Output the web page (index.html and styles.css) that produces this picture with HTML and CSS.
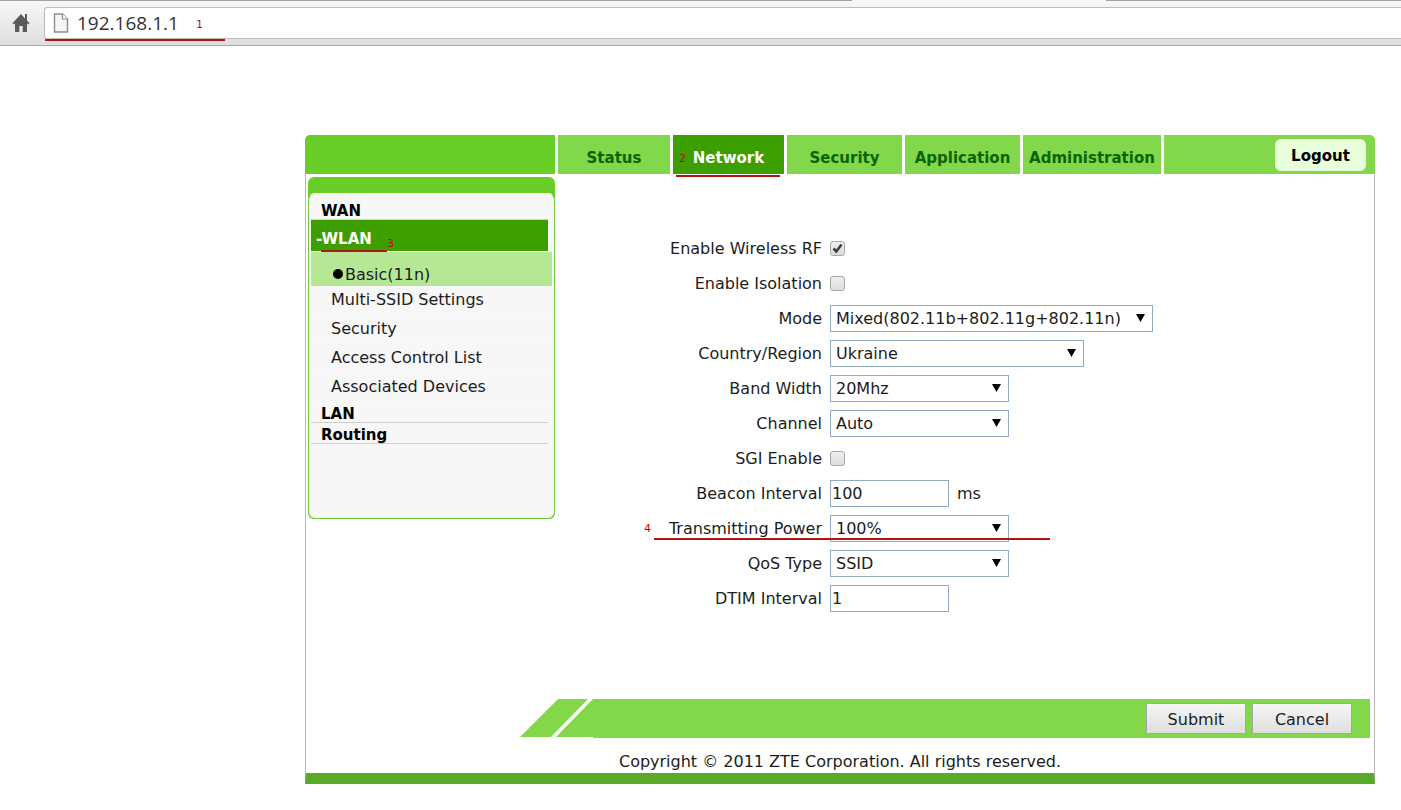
FILE: index.html
```
<!DOCTYPE html>
<html lang="en">
<head>
<meta charset="utf-8">
<title>ZTE - WLAN Basic</title>
<link rel="stylesheet" href="styles.css">
</head>
<body>
<header class="browser">
  <button class="home" type="button" aria-label="Home">
    <svg width="18" height="20" viewBox="0 0 18 20"><path fill="#5a5a5a" d="M9 1 .5 10.3 1.6 11.6 3 10.2V19h4.3v-6h3.4v6H15v-8.8l1.4 1.4 1.1-1.3L15 7.5V1h-2v4.4z"/></svg>
  </button>
  <div class="omnibox">
    <svg width="16" height="20" viewBox="0 0 16 20"><path fill="#f4f4f4" stroke="#8e8e8e" stroke-width="1.4" d="M1.5 1h8L14.500 6v13h-13z"/><path fill="#fff" stroke="#8e8e8e" stroke-width="1.2" d="M9.500 1v5h5"/></svg>
    <input class="url" type="text" value="192.168.1.1" aria-label="Address">
    <span class="note note-1">1</span>
    <span class="mark mark-1"></span>
  </div>
</header>

<div class="page">
  <nav class="topnav">
    <div class="brand"></div>
    <a class="tab tab-status" href="#">Status</a>
    <a class="tab tab-network active" href="#">Network<span class="note note-2">2</span><span class="mark mark-2"></span></a>
    <a class="tab tab-security" href="#">Security</a>
    <a class="tab tab-application" href="#">Application</a>
    <a class="tab tab-admin" href="#">Administration</a>
    <div class="session"><button class="logout" type="button">Logout</button></div>
  </nav>

  <div class="frame">
    <div class="columns">
      <aside class="sidebar">
        <nav class="menu">
          <a class="group" href="#">WAN</a>
          <a class="group current" href="#">-WLAN<span class="note note-3">3</span><span class="mark mark-3"></span></a>
          <a class="item selected" href="#"><span class="dot"></span>Basic(11n)</a>
          <a class="item" href="#">Multi-SSID Settings</a>
          <a class="item" href="#">Security</a>
          <a class="item" href="#">Access Control List</a>
          <a class="item" href="#">Associated Devices</a>
          <a class="group" href="#">LAN</a>
          <a class="group" href="#">Routing</a>
        </nav>
      </aside>

      <form class="settings" id="wlan">
        <div class="row"><label for="rf">Enable Wireless RF</label><input class="check" id="rf" type="checkbox" checked></div>
        <div class="row"><label for="iso">Enable Isolation</label><input class="check" id="iso" type="checkbox"></div>
        <div class="row"><label for="mode">Mode</label><select class="field wide" id="mode"><option>Mixed(802.11b+802.11g+802.11n)</option></select></div>
        <div class="row"><label for="country">Country/Region</label><select class="field medium" id="country"><option>Ukraine</option></select></div>
        <div class="row"><label for="band">Band Width</label><select class="field" id="band"><option>20Mhz</option></select></div>
        <div class="row"><label for="channel">Channel</label><select class="field" id="channel"><option>Auto</option></select></div>
        <div class="row"><label for="sgi">SGI Enable</label><input class="check" id="sgi" type="checkbox"></div>
        <div class="row"><label for="beacon">Beacon Interval</label><span class="with-unit"><input class="field text" id="beacon" type="text" value="100">ms</span></div>
        <div class="row"><label for="power">Transmitting Power</label><select class="field" id="power"><option>100%</option></select><span class="note note-4">4</span><span class="mark mark-4"></span></div>
        <div class="row"><label for="qos">QoS Type</label><select class="field" id="qos"><option>SSID</option></select></div>
        <div class="row"><label for="dtim">DTIM Interval</label><input class="field text" id="dtim" type="text" value="1"></div>
      </form>
    </div>

    <div class="actions">
      <svg class="slant" width="73" height="38" viewBox="0 0 73 38"><path fill="#82d84a" d="M38 0h30L31 38H0zM73 0v38H36z"/></svg>
      <div class="bar">
        <button class="action" type="submit" form="wlan">Submit</button>
        <button class="action" type="reset" form="wlan">Cancel</button>
      </div>
    </div>
    <footer class="copyright">Copyright © 2011 ZTE Corporation. All rights reserved.</footer>
  </div>
</div>
</body>
</html>
```
FILE: styles.css
```
* { box-sizing: border-box; }

body {
  margin: 0;
  background: #fff;
  color: #1c1c1c;
  font-family: Verdana, "DejaVu Sans", sans-serif;
  font-size: 16px;
}

a { color: inherit; text-decoration: none; }
button, input, select { font: inherit; color: inherit; }

/* Browser toolbar */
.browser {
  position: relative;
  display: flex;
  height: 46px;
  padding: 7px 0 6px 10px;
  background: linear-gradient(#f8f8f8, #dedede);
  border-bottom: 1px solid #a9a9a9;
}
.browser::before,
.browser::after {
  content: "";
  position: absolute;
  top: 0;
  height: 1px;
  background: #a3a3a6;
}
.browser::before { left: 0; width: 852px; }
.browser::after { left: 1106px; right: 0; }
.home {
  width: 22px;
  margin-right: 12px;
  padding: 0;
  border: 0;
  background: none;
}
.home svg { display: block; margin: auto; }
.omnibox {
  position: relative;
  flex: 1;
  display: flex;
  align-items: center;
  gap: 8px;
  padding-left: 8px;
  background: #fff;
  border: 1px solid #bdbdbd;
  border-right: 0;
  border-radius: 3px 0 0 3px;
}
.url {
  flex: 1;
  min-width: 0;
  padding: 0;
  border: 0;
  outline: 0;
  background: none;
  font-family: "Segoe UI", "Open Sans", sans-serif;
  font-size: 19px;
  line-height: 28px;
  color: #333;
}

/* Red step numbers and underlines */
.note {
  position: absolute;
  font-size: 11px;
  font-weight: 400;
  line-height: 12px;
  color: #b5120f;
}
.mark {
  position: absolute;
  height: 2px;
  background: #b31412;
}
.note-1 { left: 151px; top: 11px; }
.mark-1 { left: 0; top: 31px; width: 180px; }
.note-2 { left: 6px; top: 18px; }
.mark-2 { left: 3px; right: 4px; top: 40px; }
.note-3 { left: 76px; top: 18px; }
.mark-3 { left: 10px; width: 66px; top: 30px; }
.note-4 { left: 89px; top: 12px; }
.mark-4 { left: 99px; width: 396px; top: 27px; }

/* Router page */
.page { margin: 89px 26px 26px 305px; }
.topnav {
  display: flex;
  gap: 3px;
  height: 39px;
}
.brand {
  width: 250px;
  background: #69cf28;
  border-top-left-radius: 5px;
}
.tab {
  position: relative;
  display: flex;
  align-items: center;
  justify-content: center;
  padding-top: 6px;
  background: #82d84a;
  color: #0a6400;
  font-size: 15px;
  font-weight: 700;
}
.tab.active { background: #3d9e00; color: #fff; }
.tab-status { width: 112px; }
.tab-network { width: 111px; }
.tab-security { width: 115px; }
.tab-application { width: 115px; }
.tab-admin { width: 138px; }
.session {
  flex: 1;
  display: flex;
  justify-content: flex-end;
  padding: 4px 9px 3px;
  background: #82d84a;
  border-top-right-radius: 5px;
}
.logout {
  width: 91px;
  padding: 2px 0 0;
  border: 0;
  border-radius: 6px;
  background: #e8ffdb;
  color: #000;
  font-size: 15px;
  font-weight: 700;
}

.frame {
  border: solid #b9b9b9;
  border-width: 0 1px;
  border-bottom: 11px solid #5aaa28;
}
.columns { display: flex; align-items: flex-start; }

/* Side menu */
.sidebar {
  width: 247px;
  margin: 3px 0 0 2px;
  padding-top: 16px;
  background: #69cf28;
  border-radius: 6px;
}
.menu {
  display: flex;
  flex-direction: column;
  min-height: 326px;
  padding: 5px 2px;
  background: #f7f7f7;
  border: 1px solid #70cc3c;
  border-top-color: #f7f7f7;
  border-radius: 7px;
}
.group {
  position: relative;
  height: 21px;
  margin-right: 4px;
  padding: 2px 10px 0;
  border-bottom: 1px solid #cfcfcf;
  color: #000;
  font-size: 15px;
  font-weight: 700;
  line-height: 20px;
}
.group.current {
  height: 31px;
  padding: 9px 5px 0;
  border-bottom: 0;
  background: #3d9e00;
  color: #fff;
}
.item {
  height: 29px;
  padding-left: 20px;
  border-bottom: 1px solid #fafafa;
  line-height: 28px;
}
.item.selected {
  display: flex;
  align-items: center;
  height: 34px;
  margin-top: 1px;
  padding-top: 12px;
  border: 0;
  background: #b6e795;
}
.dot {
  width: 10px;
  height: 10px;
  margin: 0 2px 3px 2px;
  border-radius: 50%;
  background: #000;
}

/* Settings form */
.settings { flex: 1; padding-top: 57px; }
.row {
  position: relative;
  display: grid;
  grid-template-columns: 267px 1fr;
  column-gap: 8px;
  align-items: center;
  justify-items: start;
  height: 35px;
}
.row label { justify-self: end; }
.field {
  appearance: none;
  width: 179px;
  height: 27px;
  padding: 0 24px 0 5px;
  border: 1px solid #8faac4;
  border-radius: 0;
  outline: 0;
  background: #fff;
}
select.field {
  background: #fff url("data:image/svg+xml,%3Csvg xmlns='http://www.w3.org/2000/svg' width='9' height='8'%3E%3Cpath d='M0 0h9L4.5 8z'/%3E%3C/svg%3E") no-repeat right 7px top 8px;
}
.field.wide { width: 323px; }
.field.medium { width: 254px; }
.field.text { width: 119px; padding: 0 1px; }
.with-unit { display: flex; align-items: center; gap: 8px; }
.check {
  appearance: none;
  width: 15px;
  height: 15px;
  margin: 0;
  border: 1px solid #a8a8a8;
  border-radius: 3px;
  background: linear-gradient(#efefef, #dcdcdc);
}
.check:checked {
  background: url("data:image/svg+xml,%3Csvg xmlns='http://www.w3.org/2000/svg' width='13' height='13'%3E%3Cpath d='M2.500 6.500 5.300 9.500 10.500 2.500' fill='none' stroke='%23404040' stroke-width='2.600'/%3E%3C/svg%3E"), linear-gradient(#efefef, #dcdcdc);
}

/* Footer */
.actions {
  display: flex;
  margin: 83px 4px 0 214px;
}
.bar {
  flex: 1;
  display: flex;
  align-items: center;
  justify-content: flex-end;
  gap: 6px;
  height: 39px;
  padding-right: 18px;
  background: #82d84a;
}
.action {
  width: 100px;
  height: 31px;
  padding: 1px 0 0;
  border: 1px solid #a6a6a6;
  border-radius: 1px;
  background: linear-gradient(#f6f6f6, #dedede);
}
.copyright {
  height: 35px;
  padding-top: 14px;
  line-height: 20px;
  text-align: center;
}
```
